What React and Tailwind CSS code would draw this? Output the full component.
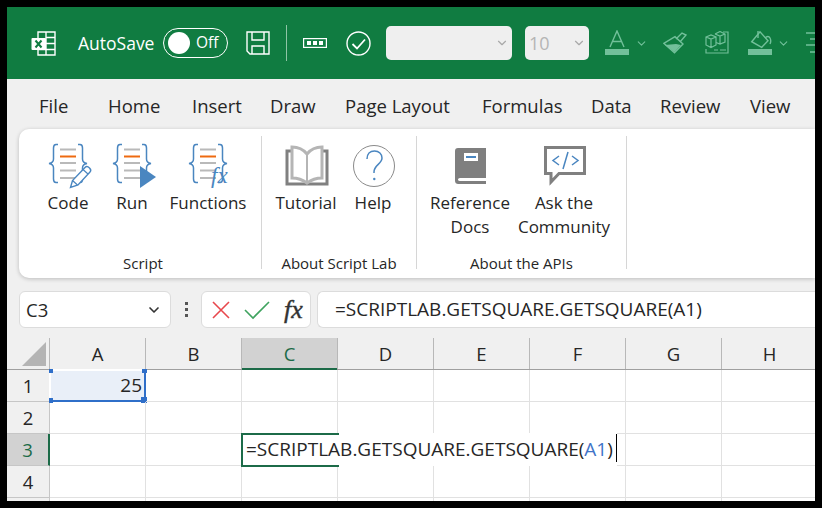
import { ChevronDown } from 'lucide-react';

const font = "font-['Open_Sans','Noto_Sans',sans-serif]";
const columns = ['A', 'B', 'C', 'D', 'E', 'F', 'G', 'H'];
const tabs = [
  ['File', 'w-[69px]'],
  ['Home', 'w-[84px]'],
  ['Insert', 'w-[78px]'],
  ['Draw', 'w-[75px]'],
  ['Page Layout', 'w-[137px]'],
  ['Formulas', 'w-[109px]'],
  ['Data', 'w-[69px]'],
  ['Review', 'w-[90px]'],
  ['View', 'w-[60px]'],
];

function ExcelLogo() {
  return (
    <svg width="25" height="25" viewBox="0 0 25 25" className="ml-[24px] shrink-0">
      <path d="M7 1h17v23H7z" fill="none" stroke="#fff" strokeWidth="1.4" />
      <path d="M15 1v23M15 6.500h9M15 12.500h9M15 18.500h9M7 18.500h8" stroke="#fff" strokeWidth="1.4" />
      <rect x="0.500" y="7" width="14.500" height="12" rx="1" fill="#fff" />
      <path d="M4.500 9.500l6 7M10.500 9.500l-6 7" stroke="#107c41" strokeWidth="2" />
    </svg>
  );
}

function SaveIcon() {
  return (
    <svg width="24" height="24" viewBox="0 0 24 24" fill="none" stroke="#fff" strokeWidth="1.4" className="ml-[18px] shrink-0">
      <path d="M1 1h22v22H4l-3-3z" />
      <path d="M6 1v8h12V1M6 23v-8h12v8" />
    </svg>
  );
}

function EllipsisBox() {
  return (
    <svg width="24" height="10" viewBox="0 0 24 10" className="ml-[16px] shrink-0">
      <rect x="0.600" y="0.600" width="22.800" height="8.800" fill="none" stroke="#fff" strokeWidth="1.200" />
      <path d="M4 3h4v4H4zM10 3h4v4h-4zM16 3h4v4h-4z" fill="#fff" />
    </svg>
  );
}

function CheckCircle() {
  return (
    <svg width="25" height="25" viewBox="0 0 25 25" fill="none" stroke="#fff" strokeWidth="1.4" className="ml-[19px] shrink-0">
      <circle cx="12.500" cy="12.500" r="11.500" />
      <path d="M6.500 13l4.500 4.500 8-9" strokeWidth="1.800" />
    </svg>
  );
}

function ScriptIcon({ children }) {
  return (
    <svg width="48" height="48" viewBox="0 0 48 48" fill="none" className="ml-[6px] shrink-0 overflow-visible">
      <path d="M11 2.500H9C7 2.500 6.500 4 6.500 6v11c0 2.500-1 4-4.500 4.500 3.500.5 4.500 2 4.500 4.500v11c0 2 .5 3.500 2.500 3.500h2" stroke="#4a86c0" strokeWidth="1.500" />
      <path d="M31 2.500h2c2 0 2.500 1.500 2.500 3.500v11c0 2.500 1 4 4.500 4.500-3.500.5-4.500 2-4.500 4.500v11c0 2-.5 3.500-2.500 3.500h-2" stroke="#4a86c0" strokeWidth="1.500" />
      <path d="M13 7.500h16M13 21h16M13 28.500h16M13 36h16" stroke="#b9b9b9" strokeWidth="2" />
      <path d="M13 14.500h16" stroke="#ee6a10" strokeWidth="2" />
      {children}
    </svg>
  );
}

function BookIcon() {
  return (
    <svg width="44" height="44" viewBox="0 0 44 44" fill="none" className="ml-[2px] shrink-0">
      <path d="M7 7H2v33h40V7h-5" stroke="#808080" strokeWidth="3" />
      <path d="M22 10C18 5 12 3 7 3v31c6 0 11 2 15 5 4-3 9-5 15-5V3c-5 0-11 2-15 7z" fill="#fff" stroke="#b5b5b5" strokeWidth="3" />
      <path d="M22 10v29" stroke="#b5b5b5" strokeWidth="2" />
    </svg>
  );
}

function HelpIcon() {
  return (
    <svg width="44" height="44" viewBox="0 0 44 44" fill="none" className="ml-[2px] shrink-0">
      <circle cx="22" cy="22" r="20.500" stroke="#8a8a8a" strokeWidth="1" />
      <path d="M15 15c0-5 3-8 7.500-8s7.500 3 7.500 7c0 6-8 7-8 14v1" stroke="#4a86c0" strokeWidth="1.500" />
      <circle cx="22.300" cy="35" r="1.200" fill="#4a86c0" />
    </svg>
  );
}

function DocsIcon() {
  return (
    <svg width="31" height="37" viewBox="0 0 31 37" className="shrink-0">
      <path d="M3 0h28v30H6c-2 0-3 .5-3 1.500S4 33 6 33h25v3H4c-3 0-4-1-4-4V3c0-2 1-3 3-3z" fill="#7f7f7f" />
      <rect x="9" y="5" width="14" height="8" fill="#fff" />
      <rect x="11" y="8" width="10" height="2" fill="#4a86c0" />
    </svg>
  );
}

function CommunityIcon() {
  return (
    <svg width="44" height="40" viewBox="0 0 44 40" fill="none" className="ml-[4px] shrink-0">
      <path d="M1.500 1.500h39v26H15L7 36v-8.500H1.500z" stroke="#808080" strokeWidth="3" fill="#fff" />
      <path d="M15 10l-6 4.500 6 4.500M28 10l6 4.500-6 4.500" stroke="#4a86c0" strokeWidth="1.500" />
      <path d="M24 6l-5 17" stroke="#4a86c0" strokeWidth="1.500" />
    </svg>
  );
}

function RibbonButton({ icon, width, children }) {
  return (
    <div className={`flex flex-col items-center ${width}`}>
      <div className="flex h-[48px] items-center justify-center">{icon}</div>
      <div className="mt-[1px] text-center text-[17px] leading-[24px] text-[#262626]">{children}</div>
    </div>
  );
}

function RibbonGroup({ label, width, pad, labelPad = '', children }) {
  return (
    <div className={`mb-[9px] mt-[7px] flex shrink-0 flex-col border-r border-[#d6d6d6] ${width}`}>
      <div className={`flex flex-1 pt-[6px] ${pad}`}>{children}</div>
      <div className={`h-[22px] text-center text-[15px] leading-[32px] text-[#262626] ${labelPad}`}>{label}</div>
    </div>
  );
}

export default function App() {
  return (
    <div className={`h-[508px] w-[822px] overflow-hidden bg-black px-[7px] pb-[7px] pt-[7px] ${font}`}>
      <div className="flex h-[494px] w-[808px] flex-col overflow-hidden bg-[#f0f0f0]">
        {/* title bar */}
        <div className="flex h-[72px] shrink-0 items-center overflow-hidden bg-[#107c41] text-white">
          <ExcelLogo />
          <span className="ml-[22px] w-[85px] shrink-0 text-[17.500px]">AutoSave</span>
          <div className="flex h-[30px] w-[65px] shrink-0 items-center rounded-full border border-white pl-[4px]">
            <span className="h-[22px] w-[22px] rounded-full bg-white" />
            <span className="ml-[6px] text-[15.500px] leading-none">Off</span>
          </div>
          <SaveIcon />
          <span className="ml-[16px] h-[36px] w-px shrink-0 bg-[#8fc5a6]" />
          <EllipsisBox />
          <CheckCircle />
          <div className="ml-[15px] flex h-[34px] w-[126px] shrink-0 items-center justify-end rounded-[5px] bg-[#efefef] pr-[3px]">
            <ChevronDown size={14} color="#a8a8a8" />
          </div>
          <div className="ml-[13px] flex h-[34px] w-[64px] shrink-0 items-center justify-between rounded-[5px] bg-[#efefef] pl-[4px] pr-[3px] text-[18px] text-[#b5b5b5]">
            10
            <ChevronDown size={14} color="#a8a8a8" />
          </div>
          <svg width="24" height="26" viewBox="0 0 24 26" fill="none" stroke="#72c09a" className="ml-[16px] shrink-0">
            <path d="M5 17L12 1l7 16M7.500 11.500h9" strokeWidth="1.400" />
            <rect x="0" y="19" width="24" height="6" fill="#72c09a" stroke="none" />
          </svg>
          <ChevronDown size={13} color="#72c09a" className="ml-[6px] shrink-0" />
          <svg width="25" height="24" viewBox="0 0 25 24" fill="none" stroke="#72c09a" strokeWidth="1.400" className="ml-[15px] shrink-0">
            <path d="M0.800 12.300L12 5.700l8 7.300-8.500 8.700z" />
            <path d="M2 14l11-1 5 1-6.500 7z" fill="#72c09a" stroke="none" />
            <path d="M13 8l6-6 4 2-6 7" />
          </svg>
          <svg width="24" height="24" viewBox="0 0 24 24" fill="none" stroke="#72c09a" strokeWidth="1.200" className="ml-[17px] shrink-0">
            <path d="M1 6l5-2 5 2v8l-5 2.500-5-2.500zM6 8v8.500M1 6l5 2 5-2" />
            <path d="M10 3l5-2.500L20 3v8l-5 2-4-1.500M15 5v8M10 3l5 2 5-2" />
            <path d="M18 1h5v21H1v-4" />
            <path d="M9 19h4M15 19h6" />
          </svg>
          <svg width="24" height="26" viewBox="0 0 24 26" fill="none" stroke="#72c09a" strokeWidth="1.400" className="ml-[19px] shrink-0">
            <path d="M3.700 11.700L12 1.700l8 9-6.300 6.600z" />
            <path d="M10 1v7" />
            <path d="M17 8c2-2 4-2 5 0s1 4 0 6" />
            <rect x="0" y="19" width="24" height="6" fill="#72c09a" stroke="none" />
          </svg>
          <ChevronDown size={13} color="#72c09a" className="ml-[5px] shrink-0" />
          <svg width="24" height="22" viewBox="0 0 24 22" fill="none" stroke="#72c09a" strokeWidth="1.400" className="ml-[16px] shrink-0">
            <path d="M0 1h24M4 7h20M0 13h24M4 20h20" />
          </svg>
        </div>

        {/* tabs */}
        <div className="flex h-[50px] shrink-0 items-center pl-[32px] pt-[3px] text-[18.500px] text-[#262626]">
          {tabs.map(([name, width]) => (
            <span key={name} className={`shrink-0 whitespace-nowrap ${width}`}>{name}</span>
          ))}
        </div>

        {/* ribbon */}
        <div className="ml-[12px] flex h-[149px] shrink-0 rounded-l-[10px] bg-white shadow-[0_1px_4px_rgba(0,0,0,0.22)]">
          <RibbonGroup label="Script" width="w-[243px]" pad="pl-[17px]" labelPad="pl-[6px]">
            <RibbonButton width="w-[64px]" icon={
              <ScriptIcon>
                <path d="M23.500 45.500l2-7L38 25.500c1-1 3-1 4.500.5s1.500 3 .5 4L31 43z" fill="#fff" stroke="#4a86c0" strokeWidth="1.400" />
                <path d="M25.500 38.500l5 4.500M36 27.500l5 4.500" stroke="#4a86c0" strokeWidth="1.200" />
              </ScriptIcon>
            }>Code</RibbonButton>
            <RibbonButton width="w-[64px]" icon={
              <ScriptIcon>
                <path d="M29 24l16 11-16 11z" fill="#4a86c0" />
              </ScriptIcon>
            }>Run</RibbonButton>
            <RibbonButton width="w-[88px]" icon={
              <ScriptIcon>
                <text x="24" y="41" fontFamily="'Liberation Serif',serif" fontStyle="italic" fontSize="23" fill="#4a86c0">fx</text>
              </ScriptIcon>
            }>Functions</RibbonButton>
          </RibbonGroup>
          <RibbonGroup label="About Script Lab" width="w-[155px]" pad="pl-[12px]">
            <RibbonButton width="w-[64px]" icon={<BookIcon />}>Tutorial</RibbonButton>
            <RibbonButton width="w-[70px]" icon={<HelpIcon />}>Help</RibbonButton>
          </RibbonGroup>
          <RibbonGroup label="About the APIs" width="w-[210px]" pad="pl-[7px]">
            <RibbonButton width="w-[92px]" icon={<DocsIcon />}>Reference<br />Docs</RibbonButton>
            <RibbonButton width="w-[96px]" icon={<CommunityIcon />}>Ask the<br />Community</RibbonButton>
          </RibbonGroup>
        </div>

        {/* formula bar */}
        <div className="mt-[13px] flex h-[37px] shrink-0 items-stretch pl-[12px] text-[#262626]">
          <div className="flex w-[152px] shrink-0 items-center justify-between rounded-[6px] border border-[#dcdcdc] bg-white pl-[6px] pr-[8px] text-[18.500px]">
            C3
            <ChevronDown size={16} strokeWidth={2.500} color="#333" />
          </div>
          <div className="flex w-[30px] shrink-0 flex-col items-center justify-center gap-[3px]">
            <span className="h-[3px] w-[3px] bg-[#555]" />
            <span className="h-[3px] w-[3px] bg-[#555]" />
            <span className="h-[3px] w-[3px] bg-[#555]" />
          </div>
          <div className="flex w-[110px] shrink-0 items-center rounded-[6px] border border-[#dcdcdc] bg-white pl-[9px]">
            <svg width="20" height="20" viewBox="0 0 20 20" fill="none" stroke="#e8474c" strokeWidth="1.600" className="shrink-0">
              <path d="M2 2l16 16M18 2L2 18" />
            </svg>
            <svg width="26" height="20" viewBox="0 0 26 20" fill="none" stroke="#3fa35f" strokeWidth="1.600" className="ml-[13px] shrink-0">
              <path d="M1 10l8 8L25 2" />
            </svg>
            <span className="ml-[14px] font-['Liberation_Serif',serif] text-[26px] italic leading-none text-[#333] [-webkit-text-stroke:0.4px_#333]">fx</span>
          </div>
          <div className="ml-[6px] flex flex-1 items-center rounded-l-[6px] border border-r-0 border-[#dcdcdc] bg-white pl-[17px] text-[19px] whitespace-nowrap">
            =SCRIPTLAB.GETSQUARE.GETSQUARE(A1)
          </div>
        </div>

        {/* sheet */}
        <div className="relative mt-[10px] flex-1 overflow-hidden text-[#262626]">
          <div className="flex h-[32px] w-[900px] border-b border-[#9f9f9f] bg-[#f0f0f0]">
            <div className="relative h-full w-[43px] shrink-0 border-r border-[#b8b8b8]">
              <svg width="24" height="24" viewBox="0 0 24 24" className="absolute left-[15px] top-[4px]">
                <path d="M24 0v24H0z" fill="#b4b4b4" />
              </svg>
            </div>
            {columns.map((c) => (
              <div key={c} className={`flex h-full w-[96px] shrink-0 items-center justify-center border-r border-[#b8b8b8] text-[18.500px] ${c === 'C' ? 'relative bg-[#d2d2d2] text-[#1c6b48]' : ''}`}>
                {c}
                {c === 'C' && <span className="absolute inset-x-0 -bottom-px h-[2px] bg-[#1c6b48]" />}
              </div>
            ))}
          </div>
          {[1, 2, 3, 4, 5].map((row) => (
            <div key={row} className="flex h-[32px] w-[900px] bg-white">
              <div className={`flex h-full w-[43px] shrink-0 items-center justify-center border-b border-r border-[#c6c6c6] text-[18.500px] ${row === 3 ? 'border-r-2 border-r-[#1c6b48] bg-[#d2d2d2] text-[#1c6b48]' : 'bg-[#f0f0f0]'}`}>
                {row < 5 ? row : ''}
              </div>
              {columns.map((c) => (
                <div key={c} className={`relative h-full w-[96px] shrink-0 border-b border-r border-[#e1e1e1] ${row === 1 && c === 'A' ? 'bg-[#e9eff8]' : ''}`}>
                  {row === 1 && c === 'A' && (
                    <div className="absolute -left-px -top-px h-[33px] w-[97px] border-2 border-white border-b-[#2f6fc9] border-r-[#2f6fc9] text-right text-[19px] leading-[29px]">
                      <span className="pr-[2px]">25</span>
                      <span className="absolute -bottom-[3px] -right-[3px] h-[6px] w-[6px] bg-[#2f6fc9]" />
                      <span className="absolute -right-[3px] -top-[2px] h-[4px] w-[5px] bg-[#2f6fc9]" />
                      <span className="absolute -bottom-[3px] -left-[2px] h-[5px] w-[4px] bg-[#2f6fc9]" />
                      <span className="absolute -left-[2px] -top-[2px] h-[4px] w-[4px] bg-[#2f6fc9]" />
                    </div>
                  )}
                  {row === 3 && c === 'C' && (
                    <>
                      <div className="absolute -left-px -top-[1px] z-10 h-[33px] w-[376px] bg-white pl-[5px] text-[19px] leading-[33px] whitespace-nowrap">
                        =SCRIPTLAB.GETSQUARE.GETSQUARE(<span className="text-[#3f74c8]">A1</span>)
                        <span className="absolute right-[0px] top-[1px] h-[28px] w-px bg-black" />
                      </div>
                      <div className="absolute -left-px -top-[1px] z-20 h-[34px] w-[98px] border-y-2 border-l-2 border-[#1c6b48]" />
                    </>
                  )}
                </div>
              ))}
            </div>
          ))}
        </div>
      </div>
    </div>
  );
}
